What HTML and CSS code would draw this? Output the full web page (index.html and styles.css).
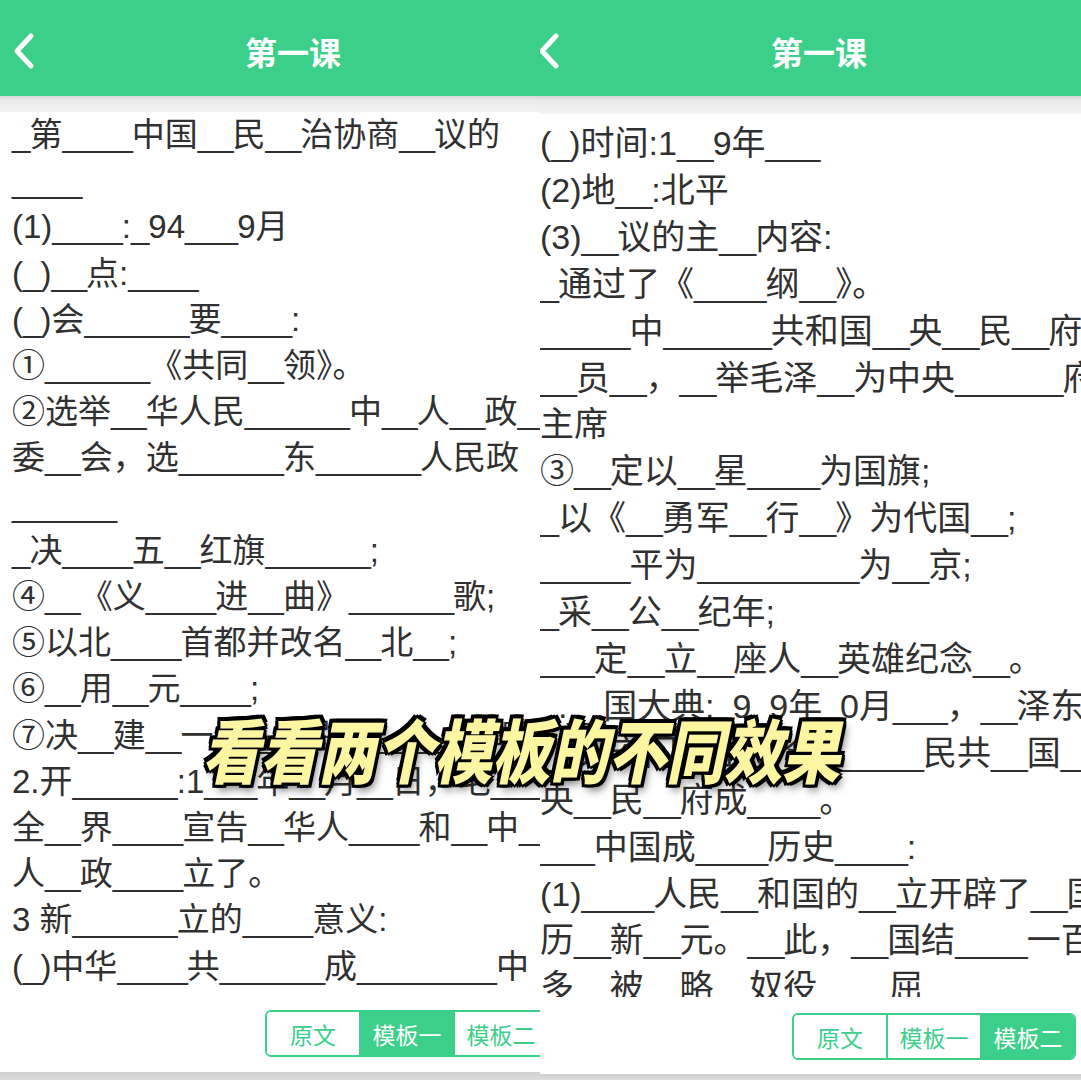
FILE: index.html
```html
<!DOCTYPE html>
<html lang="zh-CN">
<head>
<meta charset="utf-8">
<title>第一课</title>
<link rel="stylesheet" href="styles.css">
</head>
<body>
<div class="stage">
  <section class="screen screen--a">
    <div class="phone">
      <header class="nav">
        <svg class="back" viewBox="0 0 24 36"><polyline points="19,3 5,18 19,33" fill="none" stroke="#fff" stroke-width="5" stroke-linecap="round" stroke-linejoin="round"/></svg>
        <div class="title">第一课</div>
        <div></div>
      </header>
      <div class="shade"></div>
      <div class="body">
        <div class="ln"><span class="b">_</span>第<span class="b">____</span>中国<span class="b">__</span>民<span class="b">__</span>治协商<span class="b">__</span>议的</div>
        <div class="ln"><span class="b">____</span></div>
        <div class="ln">(1)<span class="b">____</span>:<span class="b">_</span>94<span class="b">___</span>9月</div>
        <div class="ln">(<span class="b">_</span>)<span class="b">__</span>点:<span class="b">____</span></div>
        <div class="ln">(<span class="b">_</span>)会<span class="b">______</span>要<span class="b">____</span>:</div>
        <div class="ln">①<span class="b">______</span>《共同<span class="b">__</span>领》。</div>
        <div class="ln">②选举<span class="b">__</span>华人民<span class="b">______</span>中<span class="b">__</span>人<span class="b">__</span>政<span class="b">____</span></div>
        <div class="ln">委<span class="b">__</span>会，选<span class="b">______</span>东<span class="b">______</span>人民政</div>
        <div class="ln"><span class="b">______</span></div>
        <div class="ln"><span class="b">_</span>决<span class="b">____</span>五<span class="b">__</span>红旗<span class="b">______</span>;</div>
        <div class="ln">④<span class="b">__</span>《义<span class="b">____</span>进<span class="b">__</span>曲》<span class="b">______</span>歌;</div>
        <div class="ln">⑤以北<span class="b">____</span>首都并改名<span class="b">__</span>北<span class="b">__</span>;</div>
        <div class="ln">⑥<span class="b">__</span>用<span class="b">__</span>元<span class="b">____</span>;</div>
        <div class="ln">⑦决<span class="b">__</span>建<span class="b">__</span>一<span class="b">_____</span>民<span class="b">_________</span>碑<span class="b">__</span></div>
        <div class="ln">2.开<span class="b">______</span>:1<span class="b">___</span>年<span class="b">__</span>月<span class="b">__</span>日，毛<span class="b">_____</span></div>
        <div class="ln">全<span class="b">__</span>界<span class="b">____</span>宣告<span class="b">__</span>华人<span class="b">____</span>和<span class="b">__</span>中<span class="b">__</span></div>
        <div class="ln">人<span class="b">__</span>政<span class="b">____</span>立了。</div>
        <div class="ln">3 新<span class="b">______</span>立的<span class="b">____</span>意义:</div>
        <div class="ln">(<span class="b">_</span>)中华<span class="b">____</span>共<span class="b">______</span>成<span class="b">________</span>中</div>
      </div>
      <div class="bar">
        <div class="seg">
          <div class="opt">原文</div>
          <div class="opt on">模板一</div>
          <div class="opt">模板二</div>
        </div>
      </div>
      <div class="foot"></div>
    </div>
  </section>

  <section class="screen screen--b">
    <div class="phone">
      <header class="nav">
        <svg class="back" viewBox="0 0 24 36"><polyline points="19,3 5,18 19,33" fill="none" stroke="#fff" stroke-width="5" stroke-linecap="round" stroke-linejoin="round"/></svg>
        <div class="title">第一课</div>
        <div></div>
      </header>
      <div class="shade"></div>
      <div class="body">
        <div class="ln">(<span class="b">_</span>)时间:1<span class="b">__</span>9年<span class="b">___</span></div>
        <div class="ln">(2)地<span class="b">__</span>:北平</div>
        <div class="ln">(3)<span class="b">__</span>议的主<span class="b">__</span>内容:</div>
        <div class="ln"><span class="b">_</span>通过了《<span class="b">____</span>纲<span class="b">__</span>》。</div>
        <div class="ln"><span class="b">_____</span>中<span class="b">______</span>共和国<span class="b">__</span>央<span class="b">__</span>民<span class="b">__</span>府</div>
        <div class="ln"><span class="b">__</span>员<span class="b">__</span>，<span class="b">__</span>举毛泽<span class="b">__</span>为中央<span class="b">______</span>府</div>
        <div class="ln">主席</div>
        <div class="ln">③<span class="b">__</span>定以<span class="b">__</span>星<span class="b">____</span>为国旗;</div>
        <div class="ln"><span class="b">_</span>以《<span class="b">__</span>勇军<span class="b">__</span>行<span class="b">__</span>》为代国<span class="b">__</span>;</div>
        <div class="ln"><span class="b">_____</span>平为<span class="b">_________</span>为<span class="b">__</span>京;</div>
        <div class="ln"><span class="b">_</span>采<span class="b">__</span>公<span class="b">__</span>纪年;</div>
        <div class="ln"><span class="b">___</span>定<span class="b">__</span>立<span class="b">__</span>座人<span class="b">__</span>英雄纪念<span class="b">__</span>。</div>
        <div class="ln"><span class="b">_</span>.<span class="b">__</span>国大典:<span class="b">_</span>9<span class="b">_</span>9年<span class="b">_</span>0月<span class="b">___</span>，<span class="b">__</span>泽东</div>
        <div class="ln"><span class="b">__</span>天安门<span class="b">__</span>上向全<span class="b">______</span>民共<span class="b">__</span>国<span class="b">__</span></div>
        <div class="ln">央<span class="b">__</span>民<span class="b">__</span>府成<span class="b">____</span>。</div>
        <div class="ln"><span class="b">___</span>中国成<span class="b">____</span>历史<span class="b">____</span>:</div>
        <div class="ln">(1)<span class="b">____</span>人民<span class="b">__</span>和国的<span class="b">__</span>立开辟了<span class="b">__</span>国</div>
        <div class="ln">历<span class="b">__</span>新<span class="b">__</span>元。<span class="b">__</span>此，<span class="b">__</span>国结<span class="b">____</span>一百</div>
        <div class="ln">多<span class="b">__</span>被<span class="b">__</span>略<span class="b">__</span>奴役<span class="b">____</span>屈</div>
      </div>
      <div class="bar">
        <div class="seg">
          <div class="opt">原文</div>
          <div class="opt">模板一</div>
          <div class="opt on">模板二</div>
        </div>
      </div>
      <div class="foot"></div>
    </div>
  </section>

  <div class="caption">看看两个模板的不同效果</div>
</div>
</body>
</html>
```

FILE: styles.css
```css
:root {
  --green: #3ccf8a;
  --ink: #303030;
}

* { box-sizing: border-box; }

body {
  margin: 0;
  background: #fff;
  font-family: "Liberation Sans", "Noto Sans CJK SC", sans-serif;
}

.stage {
  position: relative;
  width: 1081px;
  height: 1080px;
  display: grid;
  grid-template-columns: 540px 541px;
  overflow: hidden;
}

.screen {
  height: 1080px;
  overflow: hidden;
  background: #fff;
}

.phone {
  height: 100%;
  display: flex;
  flex-direction: column;
}

.screen--a .phone { width: 586px; }
.screen--b .phone { width: 558px; }

.nav {
  flex: none;
  height: 96px;
  padding-top: 6px;
  background: var(--green);
  display: grid;
  grid-template-columns: 1fr auto 1fr;
  align-items: center;
  color: #fff;
}

.back {
  justify-self: start;
  display: block;
  width: 24px;
  height: 36px;
}

.screen--a .back { margin-left: 12px; }
.screen--b .back { margin-left: -3px; }

.title {
  font-family: "Noto Sans CJK SC", sans-serif;
  font-weight: 700;
  font-size: 32px;
  line-height: 1;
}

.shade {
  flex: none;
  background: linear-gradient(#d6d6d6, #eaeaea 25%, #f2f2f2);
}

.screen--a .shade { height: 16px; }
.screen--b .shade { height: 18px; }

.body {
  flex: 1;
  min-height: 0;
  overflow: hidden;
  color: var(--ink);
}

.screen--a .body {
  padding: 0 0 0 12px;
  font-size: 33px;
  line-height: 46.2px;
}

.screen--b .body {
  padding: 6px 0 0 0;
  font-size: 34px;
  line-height: 46.9px;
}

.ln { white-space: nowrap; }

.b { letter-spacing: -0.03em; }

.bar {
  flex: none;
  display: flex;
  align-items: flex-start;
  background: #fff;
}

.screen--a .bar { height: 75px; padding: 13px 0 0 265px; }
.screen--b .bar { height: 77px; padding: 16px 0 0 252px; }

.seg {
  display: flex;
  height: 47px;
  border: 2px solid var(--green);
  border-radius: 6px;
  overflow: hidden;
}

.opt {
  width: 92px;
  display: flex;
  align-items: center;
  justify-content: center;
  font-family: "Noto Sans CJK SC", sans-serif;
  font-size: 23px;
  color: var(--green);
  background: #fff;
}

.opt + .opt {
  width: 94px;
  border-left: 2px solid var(--green);
}

.opt.on {
  background: var(--green);
  color: #fff;
}

.foot {
  flex: none;
  background: linear-gradient(#cfcfcf, #dcdcdc);
}

.screen--a .foot { height: 8px; }
.screen--b .foot { height: 6px; }

.caption {
  position: absolute;
  left: 202px;
  top: 714px;
  z-index: 5;
  font-family: "Noto Sans CJK SC", sans-serif;
  font-weight: 900;
  font-style: italic;
  font-size: 58px;
  line-height: 1.2;
  color: #fcf5a2;
  white-space: nowrap;
  transform: scaleY(1.2);
  transform-origin: 50% 50%;
  text-shadow:
    -3px -3px 0 #000, 3px -3px 0 #000, -3px 3px 0 #000, 3px 3px 0 #000,
    0 -3px 0 #000, 0 3px 0 #000, -3px 0 0 #000, 3px 0 0 #000,
    3px 5px 8px rgba(0, 0, 0, 0.55);
}
```
